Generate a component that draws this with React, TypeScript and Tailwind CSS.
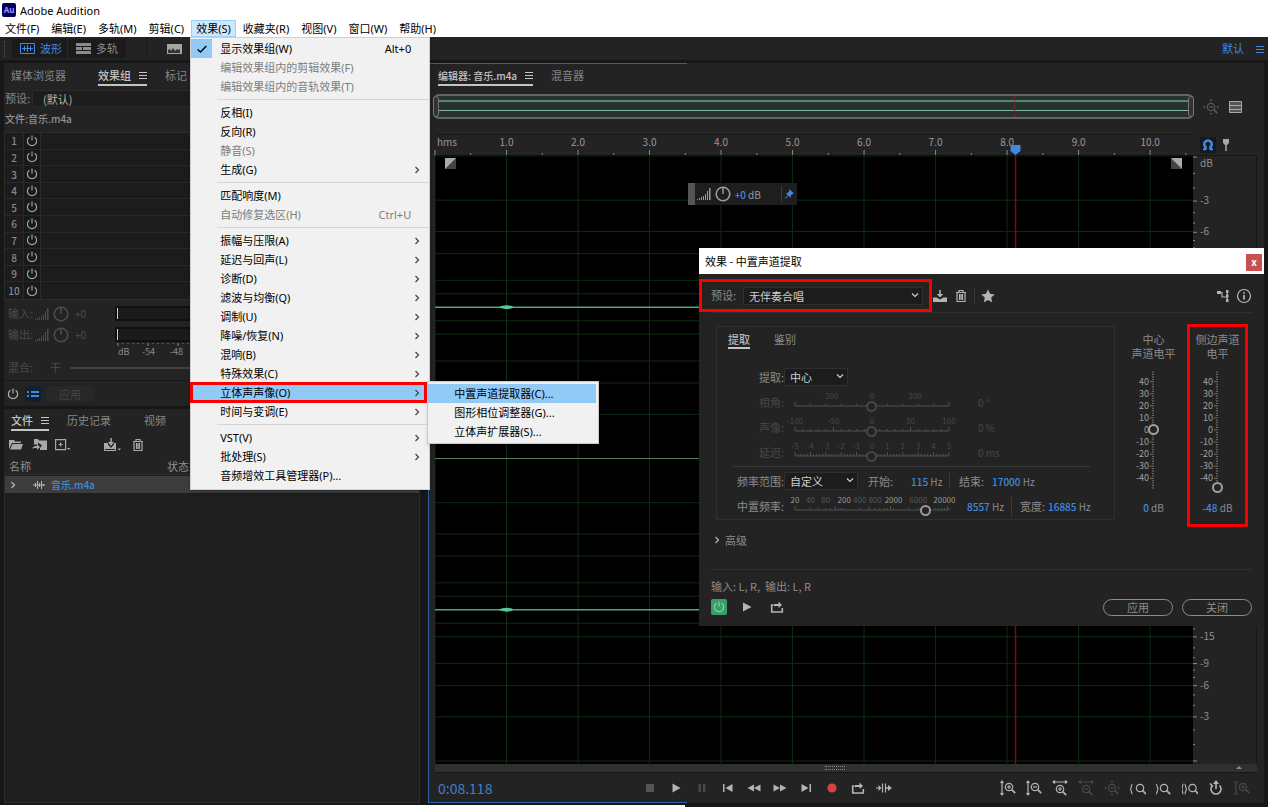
import React from "react";
import clsx from "clsx";

type MenuEntry = {
  label: string;
  shortcut?: string;
  disabled?: boolean;
  checked?: boolean;
  sub?: boolean;
  open?: boolean;
};

const menuBar = [
  "文件(F)",
  "编辑(E)",
  "多轨(M)",
  "剪辑(C)",
  "效果(S)",
  "收藏夹(R)",
  "视图(V)",
  "窗口(W)",
  "帮助(H)",
];

const effectsMenu: MenuEntry[][] = [
  [
    { label: "显示效果组(W)", shortcut: "Alt+0", checked: true },
    { label: "编辑效果组内的剪辑效果(F)", disabled: true },
    { label: "编辑效果组内的音轨效果(T)", disabled: true },
  ],
  [
    { label: "反相(I)" },
    { label: "反向(R)" },
    { label: "静音(S)", disabled: true },
    { label: "生成(G)", sub: true },
  ],
  [
    { label: "匹配响度(M)" },
    { label: "自动修复选区(H)", shortcut: "Ctrl+U", disabled: true },
  ],
  [
    { label: "振幅与压限(A)", sub: true },
    { label: "延迟与回声(L)", sub: true },
    { label: "诊断(D)", sub: true },
    { label: "滤波与均衡(Q)", sub: true },
    { label: "调制(U)", sub: true },
    { label: "降噪/恢复(N)", sub: true },
    { label: "混响(B)", sub: true },
    { label: "特殊效果(C)", sub: true },
    { label: "立体声声像(O)", sub: true, open: true },
    { label: "时间与变调(E)", sub: true },
  ],
  [
    { label: "VST(V)", sub: true },
    { label: "批处理(S)", sub: true },
    { label: "音频增效工具管理器(P)..." },
  ],
];

const stereoMenu = ["中置声道提取器(C)...", "图形相位调整器(G)...", "立体声扩展器(S)..."];

/* ---------- icons ---------- */

function Icon({
  children,
  className,
  size = 16,
}: {
  children: React.ReactNode;
  className?: string;
  size?: number;
}) {
  return (
    <svg
      width={size}
      height={size}
      viewBox="0 0 16 16"
      fill="none"
      stroke="currentColor"
      strokeWidth="1.2"
      className={clsx("shrink-0", className)}
      aria-hidden="true"
    >
      {children}
    </svg>
  );
}

const PowerIcon = ({ className }: { className?: string }) => (
  <Icon className={className}>
    <path d="M5.4 4.3a4.6 4.6 0 1 0 5.2 0M8 2.4v5.2" />
  </Icon>
);

const Chevron = ({ className }: { className?: string }) => (
  <svg width="8" height="8" viewBox="0 0 8 8" fill="none" stroke="currentColor" strokeWidth="1.2" className={className}>
    <path d="M2.5 1l3 3-3 3" />
  </svg>
);

const Lines = ({ className }: { className?: string }) => (
  <svg width="8" height="8" viewBox="0 0 8 8" stroke="currentColor" strokeWidth="1" className={className}>
    <path d="M0 1.5h8M0 4.5h8M0 7.5h8" />
  </svg>
);

const Bars = () => (
  <svg width="14" height="12" viewBox="0 0 14 12" fill="currentColor">
    <path d="M0 11h1v1H0zM2 10h1v2H2zM4 9h1v3H4zM6 8h1v4H6zM8 6h1v6H8zM10 3h1v9h-1zM12 0h1.500v12h-1.500z" />
  </svg>
);

const Knob = () => (
  <Icon>
    <circle cx="8" cy="8" r="6.8" strokeWidth="1.600" />
    <path d="M8 2v6" strokeWidth="1.500" />
  </Icon>
);

const TrashIcon = () => (
  <Icon>
    <path d="M3 4.500h10M6 4V2.500h4V4M4 4.500v9h8v-9M6.500 6v6M8 6v6M9.500 6v6" />
  </Icon>
);

const TrayIcon = () => (
  <Icon>
    <path d="M1 9.500h3.500l3.500 2 3.500-2H15v4.500H1z" fill="currentColor" stroke="none" />
    <path d="M7.200 2h1.600v4h2.400L8 9.600 4.800 6h2.400z" fill="currentColor" stroke="none" />
  </Icon>
);

const LoopIcon = () => (
  <Icon>
    <path d="M4.500 6H2.700v7h10.600V9" strokeWidth="1.600" />
    <path d="M5 7.500V5h4.500V2.500L13 6 9.500 9V7H6z" fill="currentColor" stroke="none" />
  </Icon>
);

function Lens({ x = 9, y = 7, sign }: { x?: number; y?: number; sign?: "+" | "-" }) {
  return (
    <g transform={`translate(${x} ${y})`}>
      <circle r="3.700" />
      <path d="M2.700 2.700L6.200 6.200" strokeWidth="1.700" />
      {sign && <path d={sign === "+" ? "M-2 0h4M0-2v4" : "M-2 0h4"} />}
    </g>
  );
}

const ZoomAll = () => (
  <Icon>
    <Lens x={8} y={8} sign="-" />
    <path d="M8 0l1.500 2h-3zM8 16l1.500-2h-3zM0 8l2-1.500v3zM16 8l-2-1.500v3z" fill="currentColor" stroke="none" />
  </Icon>
);

/* ---------- menus ---------- */

function StereoSubmenu() {
  return (
    <ul className="absolute left-full top-0 z-20 -mt-0.5 w-[172px] border border-[#c8c8c8] bg-[#f1f1f1] py-0.5 text-black shadow-md">
      {stereoMenu.map((item, i) => (
        <li key={item} className={clsx("mr-0.5 h-[19px]", i === 0 && "bg-[#91c9f7]")}>
          <button className="flex h-full w-full items-center whitespace-nowrap pl-[26px]">{item}</button>
        </li>
      ))}
    </ul>
  );
}

function EffectsMenu() {
  return (
    <div className="absolute -left-px top-full z-20 w-60 border border-[#d0d0d0] bg-[#f1f1f1] pb-1 pt-px text-black shadow-md">
      {effectsMenu.map((group, gi) => (
        <ul
          key={gi}
          className={clsx(gi > 0 && "before:my-[3px] before:ml-[26px] before:block before:h-px before:bg-[#d5d5d5]")}
        >
          {group.map((item) => (
            <li key={item.label} className={clsx("relative mr-0.5 h-[19px]", item.open && "bg-[#91c9f7]")}>
              <button
                disabled={item.disabled}
                className={clsx(
                  "flex h-full w-full items-center whitespace-nowrap pr-1.5",
                  item.disabled && "text-[#7d7d7d]"
                )}
              >
                <span
                  className={clsx(
                    "mr-2 flex h-full w-[21px] items-center justify-center",
                    item.checked && "bg-[#91c9f7]"
                  )}
                >
                  {item.checked && (
                    <Icon size={14}>
                      <path d="M3 8.500l3.200 3L13 4.500" strokeWidth="1.500" />
                    </Icon>
                  )}
                </span>
                <span>{item.label}</span>
                <span className="ml-auto">
                  {item.shortcut && <span className="mr-2.5">{item.shortcut}</span>}
                  {item.sub && <Chevron className="text-[#444]" />}
                </span>
              </button>
              {item.open && (
                <>
                  <StereoSubmenu />
                  <span className="pointer-events-none absolute -inset-y-px -left-px right-0 z-30 border-[3px] border-[#fb0000]" />
                </>
              )}
            </li>
          ))}
        </ul>
      ))}
    </div>
  );
}

function Header() {
  return (
    <header className="bg-white text-black">
      <div className="flex h-5 items-center gap-1 pl-0.5">
        <span className="flex h-3.5 w-3.5 items-center justify-center rounded-xs bg-[#00005b] text-[8px] font-bold leading-none text-[#9999ff]">
          Au
        </span>
        <h1>Adobe Audition</h1>
      </div>
      <nav className="flex h-[17px] gap-0.5">
        {menuBar.map((item) => {
          const open = item === "效果(S)";
          return (
            <div key={item} className="relative flex">
              <button
                className={clsx(
                  "whitespace-nowrap px-[5px]",
                  open && "bg-[#cce8ff] outline outline-[#99d1ff] -outline-offset-1"
                )}
              >
                {item}
              </button>
              {open && <EffectsMenu />}
            </div>
          );
        })}
      </nav>
    </header>
  );
}

/* ---------- left side ---------- */

function Tab({ children, active }: { children: React.ReactNode; active?: boolean }) {
  return (
    <button
      className={clsx(
        "flex h-5 items-center gap-2 whitespace-nowrap border-b-2",
        active ? "border-[#c4c4c4] font-medium text-[#c4c4c4]" : "border-transparent text-[#868686]"
      )}
    >
      {children}
      {active && <Lines />}
    </button>
  );
}

function Toolbar() {
  return (
    <div className="flex h-[23px] items-center bg-[#232323] pl-1">
      <span className="h-4 w-0.5 border-l border-dotted border-[#555]" />
      <div className="ml-1.5 flex h-[19px] bg-[#1b1b1b]">
        <button className="flex w-14 items-center gap-[5px] border-r border-[#2b2b2b] pl-2 text-[#3f8ae0]">
          <svg width="15" height="11" viewBox="0 0 15 11" fill="none" stroke="currentColor">
            <path d="M.5.5h14v10H.5zM2 5.500h11M4.500 3v5M7.500 2v7M10.500 3v5" />
          </svg>
          波形
        </button>
        <button className="flex w-[58px] items-center gap-[5px] pl-2 text-[#8c8c8c]">
          <svg width="15" height="11" viewBox="0 0 15 11" fill="currentColor">
            <path d="M0 0h15v3H0zM0 4h6v3H0zM7 4h8v3H7zM0 8h15v3H0z" />
          </svg>
          多轨
        </button>
      </div>
      <span className="ml-5 h-full w-px bg-[#191919]" />
      <button aria-label="频谱" className="ml-5 text-[#a5a5a5]">
        <svg width="15" height="10" viewBox="0 0 15 10">
          <path d="M0 0h15v10H0z" fill="currentColor" />
          <path d="M1 9V6l2-1 1 2 2-3 2 3 2-2 1 1 2-1v4z" fill="#333" />
        </svg>
      </button>
      <button className="ml-auto flex items-center gap-3 pr-1 text-[#3f8ae0]">
        默认
        <Lines className="text-[#3f8ae0]" />
      </button>
    </div>
  );
}

function LevelRow({ label }: { label: string }) {
  return (
    <div className="flex h-[21px] items-center pl-1 text-[#4c4c4c]">
      <span className="w-[27px]">{label}</span>
      <Bars />
      <span className="ml-1 flex">
        <Knob />
      </span>
      <span className="ml-1.5 w-10 text-[10px]">+0</span>
      <span className="h-[15px] flex-1 border-2 border-[#101010] bg-[#1b1b1b]">
        <span className="block h-full w-px bg-[#d6d69a]" />
      </span>
    </div>
  );
}

function EffectsRack() {
  return (
    <section className="bg-[#232323] pt-[3px]">
      <div className="flex pl-[7px]">
        <Tab>媒体浏览器</Tab>
        <span className="w-8" />
        <Tab active>效果组</Tab>
        <span className="w-[18px]" />
        <Tab>标记</Tab>
      </div>
      <div className="mt-1 flex h-[17px] items-center text-[#868686]">
        <label htmlFor="rack-preset" className="w-7 pl-px">
          预设:
        </label>
        <select
          id="rack-preset"
          className="h-full flex-1 appearance-none border border-[#2a2a2a] bg-[#1d1d1d] px-2.5 text-[#b4b4b4]"
        >
          <option>(默认)</option>
        </select>
      </div>
      <p className="flex h-[22px] items-center pl-px text-[10px] font-medium text-[#929292]">文件:音乐.m4a</p>
      <ol className="mt-[3px] grid h-42 grid-rows-10 border border-[#2c2c2c] bg-[#1c1c1c] text-[10px] text-[#8a8a8a]">
        {Array.from({ length: 10 }, (_, i) => (
          <li key={i} className="flex items-center border-b border-[#282828] last:border-b-0">
            <span className="w-[18px] text-center font-medium">{i + 1}</span>
            <button aria-label={`效果 ${i + 1}`} className="flex h-full items-center border-x border-[#2a2a2a] bg-[#191919] text-[#a0a0a0]">
              <PowerIcon />
            </button>
          </li>
        ))}
      </ol>
      <div className="mt-[3px]">
        <LevelRow label="输入:" />
        <LevelRow label="输出:" />
      </div>
      <div className="h-3.5 pl-[114px] text-[9px] leading-[14px] text-[#8a8a8a]">
        <svg className="-mt-0.5 block h-0.5 w-full overflow-visible" stroke="#8a8a8a">
          {Array.from({ length: 60 }, (_, i) => (
            <line key={i} x1={i * 5} x2={i * 5} y1="0" y2={i % 6 === 0 ? 3 : 1} />
          ))}
        </svg>
        <div className="flex">
          <span className="w-6">dB</span>
          <span className="w-7">-54</span>
          <span className="w-7">-48</span>
        </div>
      </div>
      <div className="flex h-[21px] items-center pl-1 text-[#4c4c4c]">
        <label htmlFor="rack-mix" className="w-[42px]">
          混合:
        </label>
        <span className="w-5">干</span>
        <input
          id="rack-mix"
          type="range"
          defaultValue={100}
          className="h-0.5 flex-1 appearance-none bg-[#434343] [&::-webkit-slider-thumb]:h-3 [&::-webkit-slider-thumb]:w-3 [&::-webkit-slider-thumb]:appearance-none [&::-webkit-slider-thumb]:rounded-full [&::-webkit-slider-thumb]:bg-[#434343]"
        />
      </div>
      <div className="mt-0.5 flex h-[26px] items-center border-t border-[#191919] pl-px">
        <button aria-label="电源" className="text-[#b0b0b0]">
          <PowerIcon />
        </button>
        <button aria-label="列表" className="ml-1 flex h-4 w-4 items-center justify-center bg-[#10202f] text-[#3f8ae0]">
          <svg width="12" height="8" viewBox="0 0 12 8" fill="currentColor">
            <path d="M0 1h2v2H0zM4 1h8v2H4zM0 5h2v2H0zM4 5h8v2H4z" />
          </svg>
        </button>
        <button className="ml-1 h-4 rounded-full bg-[#282828] px-3.5 leading-4 text-[#454545]">应用</button>
      </div>
    </section>
  );
}

function FilesPanel() {
  return (
    <section className="mt-[3px] flex flex-1 flex-col bg-[#232323] pt-0.5">
      <div className="flex pl-[7px]">
        <Tab active>文件</Tab>
        <span className="w-[18px]" />
        <Tab>历史记录</Tab>
        <span className="w-[33px]" />
        <Tab>视频</Tab>
      </div>
      <div className="flex h-7 items-center pl-1 text-[#a8a8a8]">
        <button aria-label="打开文件">
          <Icon>
            <path d="M1 3h5l1 1.500h6V6H4L1 12z" fill="currentColor" stroke="none" />
            <path d="M4.500 7H15l-2 5.500H2z" fill="currentColor" stroke="none" />
          </Icon>
        </button>
        <button aria-label="导入文件" className="ml-2">
          <Icon>
            <path d="M2 2h4l1 1.500h8V13H8v-2l2-2.500L6 5.500v2H2z" fill="currentColor" stroke="none" />
            <path d="M0 11.500c1-2 3-2.500 5-2.500V7l3 3-3 3v-2c-2 0-3 0-5 .5z" fill="currentColor" stroke="none" />
          </Icon>
        </button>
        <button aria-label="新建文件" className="ml-[7px]">
          <Icon>
            <path d="M.6 2.600h10v10H.6zM5.600 5.500v4M3.600 7.500h4" />
            <path d="M12 11h3.500l-1.700 2z" fill="currentColor" stroke="none" />
          </Icon>
        </button>
        <button aria-label="插入多轨" className="ml-8">
          <svg width="19" height="16" viewBox="0 0 19 16" fill="currentColor">
            <path d="M1 6h4v1.500L8 11l3-3.500V6h2v8H1zM7.300 1h1.500v4H11L8 9 5 5h2.300zM14.500 11.500H18l-1.700 2z" />
            <path d="M2 12.500h10" stroke="#232323" />
          </svg>
        </button>
        <button aria-label="删除" className="ml-2">
          <TrashIcon />
        </button>
      </div>
      <div className="flex h-3.5 items-center pl-[5px] text-[#909090]">
        <span className="w-[158px]">名称</span>
        <span>状态</span>
      </div>
      <div className="mt-px flex-1 border border-[#2c2c2c] bg-[#1e1e1e] pt-px">
        <button className="flex h-[17px] w-full items-center bg-[#3d3d3d] pl-1 text-[10px] font-medium text-[#3f8ae0]">
          <Chevron className="text-[#b5b5b5]" />
          <svg width="12" height="10" viewBox="0 0 12 10" stroke="#b5b5b5" className="ml-4 mr-1.5">
            <path d="M0 5h12M2.500 3v4M4.500 1v8M6.500 3v4M8.500 1v8M10.500 4v2" />
          </svg>
          音乐.m4a
        </button>
      </div>
    </section>
  );
}

/* ---------- editor ---------- */

const SECONDS = 10.6;
const WAVE_UNITS = 608;
const sec = (s: number) => `${(s / SECONDS) * 100}%`;
const row = (y: number) => `${(y / WAVE_UNITS) * 100}%`;
const CHANNELS = [152, 454];
const HALF = 151;
const level = (db: number) => HALF * Math.pow(10, -db / 20);
const PLAYHEAD = 8.118;

function Ruler() {
  return (
    <svg className="block h-[21px] w-full overflow-visible border-t border-[#161616]" fill="#999" fontSize="10">
      <text x="2" y="11">
        hms
      </text>
      {Array.from({ length: 22 }, (_, i) => {
        const s = i / 2;
        const major = i % 2 === 0;
        return (
          <React.Fragment key={i}>
            <line x1={sec(s)} x2={sec(s)} y1={major ? 15 : 18} y2="21" stroke="#8a8a8a" />
            {major && i > 0 && (
              <text x={sec(s)} y="11" textAnchor="middle">
                {s.toFixed(1)}
              </text>
            )}
          </React.Fragment>
        );
      })}
      <svg x={sec(PLAYHEAD)} y="10" overflow="visible">
        <path d="M-5 0H5V6L0 10L-5 6z" fill="#3f8ae0" />
      </svg>
    </svg>
  );
}

function Waveform() {
  return (
    <svg className="absolute inset-0 h-full w-full bg-black">
      {Array.from({ length: 11 }, (_, i) => (
        <line key={i} x1={sec(i)} x2={sec(i)} y1="0" y2="100%" stroke="#0d2c12" />
      ))}
      {CHANNELS.map((c) => (
        <React.Fragment key={c}>
          {[0, 3, 6, 9, 15, 21].flatMap((db) =>
            [-1, 1].map((dir) => (
              <line
                key={`${db}${dir}`}
                x1="0"
                x2="100%"
                y1={row(c + dir * level(db))}
                y2={row(c + dir * level(db))}
                stroke="#0e2b13"
              />
            ))
          )}
          <line x1="0" x2="100%" y1={row(c)} y2={row(c)} stroke="#4fa585" strokeWidth="1.500" />
          <svg x={sec(1)} y={row(c)} overflow="visible">
            <path d="M-8 0L-4-1.500L0-2L5-1.500L7 0L4 1.500L0 2L-5 1z" fill="#58c79b" />
          </svg>
        </React.Fragment>
      ))}
      <line x1="0" x2="100%" y1={row(303)} y2={row(303)} stroke="#5a7f55" />
      <line x1={sec(PLAYHEAD)} x2={sec(PLAYHEAD)} y1="0" y2="100%" stroke="#7a0c12" strokeWidth="1.500" />
      <svg x="10" y="3">
        <path d="M0 0h11v11H0z" fill="#aaa" />
        <path d="M11 0v11H0z" fill="#444" />
      </svg>
      <svg x="97.100%" y="3">
        <path d="M0 0h11v11H0z" fill="#aaa" />
        <path d="M0 0v11h11z" fill="#444" />
      </svg>
    </svg>
  );
}

function DecibelScale() {
  return (
    <svg className="absolute inset-0 h-full w-full" fill="#8f8f8f" fontSize="10">
      <text x="7" y="11">
        dB
      </text>
      {CHANNELS.map((c, ci) =>
        [0, 1, 2, 3, 4, 5, 6, 7, 8, 9, 10, 12, 15, 18, 21].flatMap((db) =>
          [-1, 1].map((dir) => {
            const y = c + dir * level(db);
            const major = [0, 3, 6, 9, 15, 21].includes(db);
            const labels = ci === 0 ? (dir < 0 ? [3, 6] : []) : dir > 0 ? [3, 6, 9, 15] : [];
            return (
              <React.Fragment key={`${c}${db}${dir}`}>
                <line x1="0" x2={major ? 4 : 2} y1={row(y)} y2={row(y)} stroke="#8a8a8a" />
                {labels.includes(db) && (
                  <text x="7" y={row(y)} dy="3">
                    -{db}
                  </text>
                )}
              </React.Fragment>
            );
          })
        )
      )}
    </svg>
  );
}

const transport: { name: string; tone?: string; art: React.ReactNode }[] = [
  { name: "停止", tone: "text-[#555]", art: <path d="M4 4h8v8H4z" /> },
  { name: "播放", art: <path d="M4.500 3.500L12.500 8l-8 4.500z" /> },
  { name: "暂停", tone: "text-[#484848]", art: <path d="M4.500 4h2.500v8H4.500zM9 4h2.500v8H9z" /> },
  { name: "上一个", art: <path d="M3 4h1.500v8H3zM12.500 4v8l-7-4z" /> },
  { name: "快退", art: <path d="M8 4.500v7L1.500 8zM14.500 4.500v7L8 8z" /> },
  { name: "快进", art: <path d="M1.500 4.500v7L8 8zM8 4.500v7L14.500 8z" /> },
  { name: "下一个", art: <path d="M3.500 4v8l7-4zM11.500 4H13v8h-1.500z" /> },
  { name: "录制", tone: "text-[#d8403f]", art: <circle cx="8" cy="8" r="4.600" /> },
];

const zooms: { name: string; off?: boolean; art: React.ReactNode }[] = [
  { name: "垂直放大", art: <><path d="M2 1v14M.500 3L2 1l1.500 2M.500 13L2 15l1.500-2" /><Lens sign="+" /></> },
  { name: "垂直缩小", art: <><path d="M2 1v14M.500 3L2 1l1.500 2M.500 13L2 15l1.500-2" /><Lens sign="-" /></> },
  { name: "水平放大", art: <><path d="M1 2h14M3 .5L1 2l2 1.500M13 .5L15 2l-2 1.500" /><Lens x={8} y={9} sign="+" /></> },
  { name: "水平缩小", off: true, art: <><path d="M1 2h14M3 .5L1 2l2 1.500M13 .5L15 2l-2 1.500" /><Lens x={8} y={9} sign="-" /></> },
  {
    name: "全部缩小",
    off: true,
    art: (
      <>
        <Lens x={8} y={8} sign="-" />
        <path d="M8 0l1.500 2h-3zM8 16l1.500-2h-3zM0 8l2-1.500v3zM16 8l-2-1.500v3z" fill="currentColor" stroke="none" />
      </>
    ),
  },
  { name: "缩放至入点", art: <><path d="M2.500 4C1 4 1.800 9 0 9c1.800 0 1 5 2.500 5" /><Lens x={10} y={8} /></> },
  { name: "缩放至出点", art: <><path d="M0 4c1.500 0 .8 5 2.500 5C.8 9 1.500 14 0 14" /><Lens x={8} y={8} /></> },
  { name: "缩放至选区", art: <><path d="M1.500 4C0 4 .8 9-.5 9c1.300 0 .5 5 2 5M2.500 4C4 4 3.200 9 5 9c-1.800 0-1 5-2.500 5" /><Lens x={10.500} y={8} /></> },
  { name: "计时", art: <><path d="M4.500 5.500a5 5 0 1 0 7 0M8 3v6M2 3.500l3 3" strokeWidth="1.600" /><path d="M5 4h6L8 0z" fill="currentColor" stroke="none" /></> },
  { name: "重置", off: true, art: <><path d="M2 2v12M0 2h4M0 14h4" /><Lens sign="+" /></> },
];

function Editor() {
  return (
    <section className="relative flex min-w-0 flex-1 flex-col border-l border-[#2b62a5] bg-[#232323] pt-[3px]">
      <span className="absolute -left-px top-0 h-px w-[31%] bg-[#2b62a5]" />
      <span className="absolute -left-px bottom-0 h-px w-[31%] bg-[#2b62a5]" />
      <div className="flex pl-[9px]">
        <Tab active>
          <span className="text-[10px]">编辑器: 音乐.m4a</span>
        </Tab>
        <span className="w-[18px]" />
        <Tab>混音器</Tab>
      </div>

      {/* Overview of the whole file */}
      <div className="mt-2 flex h-[25px] items-center pl-1">
        <div className="relative flex h-full flex-1 flex-col justify-between rounded-md border-2 border-[#686464] bg-[#25322d] py-1">
          <span className="h-0.5 bg-[#5f8172]" />
          <span className="mb-0.5 h-px bg-[#86b8a6]" />
          <span className="absolute inset-y-0 -left-0.5 w-1.5 rounded-sm border border-[#777] bg-[#333]" />
          <span className="absolute inset-y-0 -right-0.5 w-1.5 rounded-sm border border-[#777] bg-[#333]" />
          <span className="absolute inset-y-0 left-[76%] ml-1 border-l border-dashed border-[#7d2a2c]" />
        </div>
        <div className="flex w-[70px] items-center pl-[9px]">
          <button aria-label="全部缩小" className="text-[#585858]">
            <ZoomAll />
          </button>
          <button aria-label="视图列表" className="ml-2.5 text-[#a8a8a8]">
            <svg width="13" height="12" viewBox="0 0 13 12" fill="#555" stroke="currentColor">
              <path d="M.5.5h12v11H.5zM.5 4.500h12M.5 8.500h12" />
            </svg>
          </button>
        </div>
      </div>

      <div className="mt-[15px] flex flex-1 flex-col">
        <div className="flex pl-1.5">
          <div className="flex-1">
            <Ruler />
          </div>
          <div className="flex w-[71px] items-center pl-[7px]">
            <button aria-label="对齐" className="flex h-4 w-4 items-center justify-center bg-[#161a20] text-[#3f8ae0]">
              <Icon>
                <path d="M5.500 12.500V10A3.700 3.700 0 1 1 10.500 10V12.500" strokeWidth="2.600" />
                <path d="M3 12.300h3.500M9.500 12.300H13" strokeWidth="2" />
              </Icon>
            </button>
            <button aria-label="标记" className="ml-0.5 text-[#a8a8a8]">
              <Icon>
                <path d="M5 2h6v4L9 8H7L5 6z" fill="currentColor" stroke="none" />
                <path d="M8 7v7" strokeWidth="1.500" />
              </Icon>
            </button>
          </div>
        </div>
        <div className="flex flex-1 pl-1.5">
          <div className="relative flex-1">
            <Waveform />
            <div className="absolute left-1/3 top-7 flex h-[22px] w-[109px] items-center bg-[#1e1e1e] text-[10px] text-[#9a9a9a]">
              <span className="mr-0.5 h-full w-[7px] bg-[#555]" />
              <Bars />
              <span className="ml-1 flex">
                <Knob />
              </span>
              <span className="ml-1 font-medium text-[#3f8ae0]">+0</span>
              <span className="ml-0.5">dB</span>
              <button aria-label="固定" className="ml-auto flex h-4 w-4 items-center border-l border-[#3a3a3a] pl-0.5 text-[#3f8ae0]">
                <Icon size={10}>
                  <path d="M9 1l6 6-2 .5-2.500 2.500-.5 3-3-3-5 5 5-5-3-3 3-.5L9 4z" fill="currentColor" />
                </Icon>
              </button>
            </div>
          </div>
          <div className="relative mr-[7px] w-16 border-r border-t border-[#161616]">
            <DecibelScale />
          </div>
        </div>
        <div className="ml-1.5 mr-[7px] flex h-[9px] items-center border-b border-[#161616] bg-[#303030]">
          <span className="ml-auto h-1 w-5 border-y border-dotted border-[#888]" />
          <svg width="8" height="4" viewBox="0 0 8 4" className="ml-auto mr-3.5" fill="#888">
            <path d="M4 0l3 3H1z" />
          </svg>
        </div>
      </div>

      <div className="flex h-[30px] items-center pl-[9px] pr-[9px] text-[#b4b4b4]">
        <time className="w-[199px] text-[14px] text-[#3f7fd0]">0:08.118</time>
        {transport.map((t) => (
          <button key={t.name} aria-label={t.name} className={clsx("flex w-[26px] justify-center", t.tone)}>
            <Icon>
              <g fill="currentColor" stroke="none">
                {t.art}
              </g>
            </Icon>
          </button>
        ))}
        <button aria-label="循环" className="flex w-[26px] justify-center">
          <LoopIcon />
        </button>
        <button aria-label="跳过选区" className="flex w-[26px] justify-center">
          <Icon>
            <path d="M0 8h3M6.500 3.500v9M9.500 3.500v9" />
            <path d="M5.500 8L2.500 5v6zM10 7.300h2V5L16 8l-4 3V8.700h-2z" fill="currentColor" stroke="none" />
          </Icon>
        </button>
        <div className="ml-auto flex">
          {zooms.map((z) => (
            <button
              key={z.name}
              aria-label={z.name}
              className={clsx("flex w-[26px] justify-center", z.off && "text-[#484848]")}
            >
              <Icon>{z.art}</Icon>
            </button>
          ))}
        </div>
      </div>
    </section>
  );
}

/* ---------- effect window ---------- */

type Mark = { at: number; text: string; dim?: boolean };

const thumb =
  "[&::-webkit-slider-thumb]:h-[11px] [&::-webkit-slider-thumb]:w-[11px] [&::-webkit-slider-thumb]:appearance-none [&::-webkit-slider-thumb]:rounded-full [&::-webkit-slider-thumb]:border-2 [&::-webkit-slider-thumb]:border-current [&::-webkit-slider-thumb]:bg-[#232323]";

function ScaleSlider({
  id,
  marks,
  ticks,
  value = 50,
  disabled,
}: {
  id: string;
  marks: Mark[];
  ticks: number[];
  value?: number;
  disabled?: boolean;
}) {
  return (
    <div className={clsx("relative ml-[11px] h-[25px] w-[154px]", disabled ? "text-[#474747]" : "text-[#9a9a9a]")}>
      <svg className="block h-full w-full overflow-visible" fontSize="8" fill="currentColor">
        {marks.map((m) => (
          <text key={m.text} x={`${m.at}%`} y="9" textAnchor="middle" fill={m.dim ? "#585858" : undefined}>
            {m.text}
          </text>
        ))}
        {ticks.map((t, i) => (
          <line key={i} x1={`${t}%`} x2={`${t}%`} y1={i % 5 === 0 ? 12 : 14} y2="16" stroke="#505050" />
        ))}
        <line x1="0" x2="100%" y1="16" y2="16" stroke="#505050" strokeWidth="1" />
      </svg>
      <input
        id={id}
        type="range"
        defaultValue={value}
        disabled={disabled}
        className={clsx("absolute -left-1.5 top-2.5 h-3 w-[165px] appearance-none bg-transparent", thumb)}
      />
    </div>
  );
}

const even = (n: number) => Array.from({ length: n + 1 }, (_, i) => (i / n) * 100);

const phaseMarks: Mark[] = [
  { at: 23, text: "-200" },
  { at: 50, text: "0" },
  { at: 78, text: "200" },
];
const panMarks: Mark[] = [-100, -50, 0, 50, 100].map((v) => ({ at: 50 + v / 2, text: `${v}` }));
const delayMarks: Mark[] = [-5, -4, -3, -2, -1, 0, 1, 2, 3, 4, 5].map((v) => ({ at: 50 + v * 10, text: `${v}` }));
const freqMarks: Mark[] = [
  { at: 0, text: "20" },
  { at: 10, text: "40", dim: true },
  { at: 20, text: "80", dim: true },
  { at: 32, text: "200" },
  { at: 42, text: "400", dim: true },
  { at: 52, text: "800", dim: true },
  { at: 64, text: "2000" },
  { at: 80, text: "6000", dim: true },
  { at: 97, text: "20000" },
];
const freqTicks = [0, 10, 15, 20, 23, 26, 28, 30, 32, 42, 48, 52, 55, 58, 60, 62, 64, 74, 80, 84, 87, 91, 93, 95, 97, 99, 100];

function FieldLabel({ htmlFor, children }: { htmlFor: string; children: React.ReactNode }) {
  return (
    <label htmlFor={htmlFor} className="w-[67px] shrink-0 text-right">
      {children}
    </label>
  );
}

function DarkSelect({ id, text, className }: { id: string; text: string; className: string }) {
  return (
    <div className={clsx("relative", className)}>
      <select
        id={id}
        className="h-[18px] w-full appearance-none border border-[#2f2f2f] bg-[#1c1c1c] pl-[5px] text-[#cfcfcf]"
      >
        <option>{text}</option>
      </select>
      <Chevron className="pointer-events-none absolute right-1 top-1 rotate-90 text-[#cfcfcf]" />
    </div>
  );
}

function Value({ n, unit }: { n: string; unit: string }) {
  return (
    <span className="whitespace-nowrap text-[10px]">
      <b className="font-medium text-[#3f8ae0]">{n}</b> {unit}
    </span>
  );
}

function LevelColumn({ id, title, value, className }: { id: string; title: [string, string]; value: number; className: string }) {
  return (
    <div className={clsx("relative flex flex-col items-center pt-2", className)}>
      <label htmlFor={id} className="text-center leading-[14px]">
        {title[0]}
        <br />
        {title[1]}
      </label>
      <div className="relative mt-3 h-[116px] w-[60px] text-[#a0a0a0]">
        <svg className="block h-full w-full overflow-visible" fontSize="9" fill="currentColor">
          {[40, 30, 20, 10, 0, -10, -20, -30, -40].map((v) => (
            <text key={v} x="25" y={`${50 - (v / 96) * 100}%`} dy="3" textAnchor="end">
              {v}
            </text>
          ))}
          {Array.from({ length: 49 }, (_, i) => (
            <line
              key={i}
              x1={i % 5 === 4 ? 26 : 28}
              x2="30"
              y1={`${(i / 48) * 100}%`}
              y2={`${(i / 48) * 100}%`}
              stroke="#707070"
            />
          ))}
        </svg>
        <input
          id={id}
          type="range"
          min={-48}
          max={48}
          defaultValue={value}
          className={clsx(
            "absolute -top-1.5 left-6 h-[127px] w-3 appearance-none bg-transparent [direction:rtl] [writing-mode:vertical-lr]",
            thumb
          )}
        />
      </div>
      <span className="mt-[11px] leading-4">
        <Value n={`${value}`} unit="dB" />
      </span>
    </div>
  );
}

function EffectWindow() {
  return (
    <section className="absolute right-1 top-62 z-10 w-[565px] bg-[#232323] text-[#8c8c8c]">
      <div className="flex h-[26px] items-center justify-between bg-white pl-1.5 pr-0.5 text-black">
        <h2>效果 - 中置声道提取</h2>
        <button aria-label="关闭窗口" className="mt-0.5 h-[17px] w-4 bg-[#c75050] text-[10px] font-bold leading-none text-white">
          x
        </button>
      </div>
      <div className="relative mx-3 flex h-[39px] items-center border-b border-[#303030] pt-[5px]">
        <label htmlFor="effect-preset" className="w-8">
          预设:
        </label>
        <DarkSelect id="effect-preset" text="无伴奏合唱" className="w-[180px]" />
        <span className="pointer-events-none absolute -left-3 bottom-0 top-[5px] w-[233px] border-[3px] border-[#fb0000]" />
        <div className="ml-[9px] flex items-center gap-[5px] text-[#b4b4b4]">
          <button aria-label="保存预设">
            <TrayIcon />
          </button>
          <button aria-label="删除预设">
            <TrashIcon />
          </button>
          <span className="h-4 w-px bg-[#383838]" />
          <button aria-label="收藏">
            <Icon>
              <path d="M8 1.500l2 4.300 4.700.6-3.500 3.200.9 4.700L8 12l-4.100 2.300.9-4.700L1.300 6.400l4.700-.6z" fill="currentColor" stroke="none" />
            </Icon>
          </button>
        </div>
        <div className="ml-auto flex gap-[5px] text-[#b4b4b4]">
          <button aria-label="声道">
            <Icon>
              <path d="M2 3h4v3H2zM11 2h2.500v3H11zM11 6.500h2.500v3H11zM11 11h2.500v3H11z" fill="currentColor" stroke="none" />
              <path d="M4 4.500h3v4.500h5M12.200 3v10" />
            </Icon>
          </button>
          <button aria-label="信息">
            <Icon>
              <circle cx="8" cy="8" r="6.500" />
              <path d="M8 7v4.500M8 4.200v1.500" strokeWidth="1.800" />
            </Icon>
          </button>
        </div>
      </div>

      <div className="mr-4 flex items-start justify-between pl-[17px] pt-[11px]">
        <div className="mt-0.5 w-[399px] border border-[#303030] pt-1">
          <div className="flex gap-6 pl-[11px]">
            <button className="h-[18px] border-b-2 border-[#c4c4c4] font-medium leading-[16px] text-[#b4b4b4]">提取</button>
            <button className="h-[18px] border-b-2 border-transparent leading-[16px]">鉴别</button>
          </div>
          <div className="mt-[17px] flex h-[22px] items-center">
            <FieldLabel htmlFor="extract">提取:</FieldLabel>
            <DarkSelect id="extract" text="中心" className="w-16" />
          </div>
          <div className="mt-0.5 flex items-center text-[#474747]">
            <FieldLabel htmlFor="phase">相角:</FieldLabel>
            <ScaleSlider id="phase" marks={phaseMarks} ticks={even(10)} disabled />
            <span className="ml-[29px] text-[10px]">0 °</span>
          </div>
          <div className="flex items-center text-[#474747]">
            <FieldLabel htmlFor="pan">声像:</FieldLabel>
            <ScaleSlider id="pan" marks={panMarks} ticks={even(20)} disabled />
            <span className="ml-[29px] text-[10px]">0 %</span>
          </div>
          <div className="flex items-center text-[#474747]">
            <FieldLabel htmlFor="delay">延迟:</FieldLabel>
            <ScaleSlider id="delay" marks={delayMarks} ticks={even(50)} disabled />
            <span className="ml-[29px] text-[10px]">0 ms</span>
          </div>
          <hr className="ml-4 mr-6 mt-px border-[#383838]" />
          <div className="mt-0.5 flex h-6 items-center">
            <FieldLabel htmlFor="range">频率范围:</FieldLabel>
            <DarkSelect id="range" text="自定义" className="w-[74px]" />
            <span className="ml-2.5 w-[43px]">开始:</span>
            <span className="w-[38px]">
              <Value n="115" unit="Hz" />
            </span>
            <span className="h-4 w-px bg-[#383838]" />
            <span className="ml-[9px] w-[33px]">结束:</span>
            <Value n="17000" unit="Hz" />
          </div>
          <div className="mt-px flex items-center">
            <FieldLabel htmlFor="center">中置频率:</FieldLabel>
            <ScaleSlider id="center" marks={freqMarks} ticks={freqTicks} value={85} />
            <span className="ml-[18px] w-11">
              <Value n="8557" unit="Hz" />
            </span>
            <span className="h-5 w-px bg-[#383838]" />
            <span className="ml-2 w-7">宽度:</span>
            <Value n="16885" unit="Hz" />
          </div>
        </div>
        <div className="flex">
          <LevelColumn id="center-level" title={["中心", "声道电平"]} value={0} className="w-[67px]" />
          <LevelColumn
            id="side-level"
            title={["侧边声道", "电平"]}
            value={-48}
            className="h-[203px] w-[61px] outline-3 -outline-offset-3 outline-[#fb0000]"
          />
        </div>
      </div>

      <button className="ml-3.5 mt-1 flex h-[18px] items-center gap-1">
        <Chevron className="text-[#b4b4b4]" />
        高级
      </button>
      <div className="mx-3 mt-5 border-t border-[#303030] pt-[7px]">
        <p className="h-[18px] whitespace-pre leading-[18px]">输入: L, R,  输出: L, R</p>
        <div className="flex h-[31px] items-start pt-1 text-[#b4b4b4]">
          <button aria-label="开关" className="rounded-xs bg-[#3c9a6c] text-[#7fd8a8]">
            <PowerIcon />
          </button>
          <button aria-label="预览播放" className="ml-3">
            <Icon>
              <path d="M4 3.500L12.500 8 4 12.500z" fill="currentColor" stroke="none" />
            </Icon>
          </button>
          <button aria-label="循环播放" className="ml-3.5">
            <LoopIcon />
          </button>
          <button className="ml-auto h-[17px] w-[70px] rounded-full border border-[#8c8c8c] leading-none text-[#8c8c8c]">应用</button>
          <button className="ml-[9px] h-[17px] w-[70px] rounded-full border border-[#8c8c8c] leading-none text-[#8c8c8c]">关闭</button>
        </div>
      </div>
    </section>
  );
}

export default function App() {
  return (
    <div className="relative flex min-h-screen flex-col bg-[#171717] font-['Noto_Sans_CJK_SC',sans-serif] text-[11px] leading-[17px]">
      <div className="relative z-20 font-['Noto_Sans','Noto_Sans_CJK_SC',sans-serif]">
        <Header />
      </div>
      <Toolbar />
      <main className="mt-[3px] flex flex-1 gap-2 pr-1">
        <div className="flex w-105 shrink-0 flex-col pl-1">
          <EffectsRack />
          <FilesPanel />
        </div>
        <Editor />
      </main>
      <EffectWindow />
      <div className="h-1 pt-0.5">
        <div className="h-full w-[54%] bg-white" />
      </div>
    </div>
  );
}
